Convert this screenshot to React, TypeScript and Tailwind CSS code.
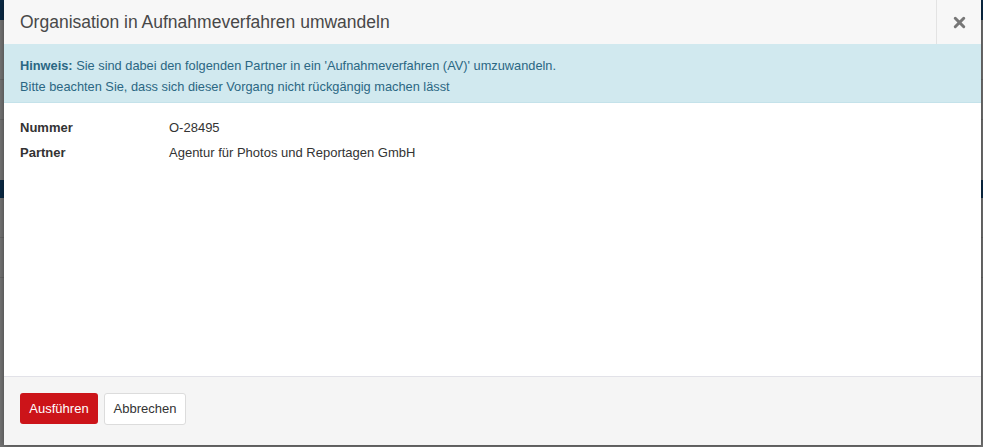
import { X } from 'lucide-react';

const rows = [
  { label: 'Nummer', value: 'O-28495' },
  { label: 'Partner', value: 'Agentur für Photos und Reportagen GmbH' },
];

const App = () => {
  return (
    <div className="relative w-[983px] h-[447px] overflow-hidden bg-[#737373] font-['Liberation_Sans',Arial,sans-serif]">
      {/* Darkened page behind the modal */}
      <div className="flex flex-col w-[983px] h-[447px]">
        <div className="h-[20px] bg-[#0b2a45]" />
        <div className="h-[60px] border-b border-[#666]" />
        <div className="h-[40px] border-b border-[#666]" />
        <div className="h-[60px]" />
        <div className="h-[18px] bg-[#0b2a45]" />
        <div className="h-[40px] border-b border-[#666]" />
        <div className="h-[40px] border-b border-[#666]" />
        <div className="flex-1" />
      </div>

      {/* Modal */}
      <div className="absolute left-[4px] top-0 w-[977px] h-[445px] flex flex-col bg-white shadow-[0_0_6px_rgba(0,0,0,0.4)]">
        <div className="flex h-[44px] bg-[#f7f7f7]">
          <h4 className="flex-1 pl-[16px] pt-[10px] text-[17.5px] leading-[24px] text-[#484848]">
            Organisation in Aufnahmeverfahren umwandeln
          </h4>
          <button className="w-[45px] flex items-center justify-center border-l border-[#e3e3e3] text-[#777]">
            <X size={17} strokeWidth={4.2} />
          </button>
        </div>

        <div className="h-[59px] bg-[#d1e9ef] border-b border-[#c4e2ea] pl-[16px] pt-[11px] text-[12.8px] leading-[21px] text-[#2b6783]">
          <div>
            <span className="font-bold">Hinweis:</span> Sie sind dabei den folgenden Partner in ein 'Aufnahmeverfahren (AV)' umzuwandeln.
          </div>
          <div>Bitte beachten Sie, dass sich dieser Vorgang nicht rückgängig machen lässt</div>
        </div>

        <div className="flex-1 pl-[16px] pt-[15px] flex flex-col gap-[6px] text-[13px] leading-[19px] text-[#333]">
          {rows.map((r) => (
            <div key={r.label} className="flex">
              <div className="w-[149px] font-bold">{r.label}</div>
              <div>{r.value}</div>
            </div>
          ))}
        </div>

        <div className="h-[69px] bg-[#f5f5f5] border-t border-[#e2e2e8] pl-[16px] pt-[16px] flex gap-[6px] items-start">
          <button className="h-[31px] w-[78px] rounded-[3px] bg-[#cc1419] text-white text-[13px]">
            Ausführen
          </button>
          <button className="h-[32px] w-[82px] rounded-[3px] bg-white border border-[#dcdcdc] text-[#333] text-[13px]">
            Abbrechen
          </button>
        </div>
      </div>
    </div>
  );
};

export default App;
